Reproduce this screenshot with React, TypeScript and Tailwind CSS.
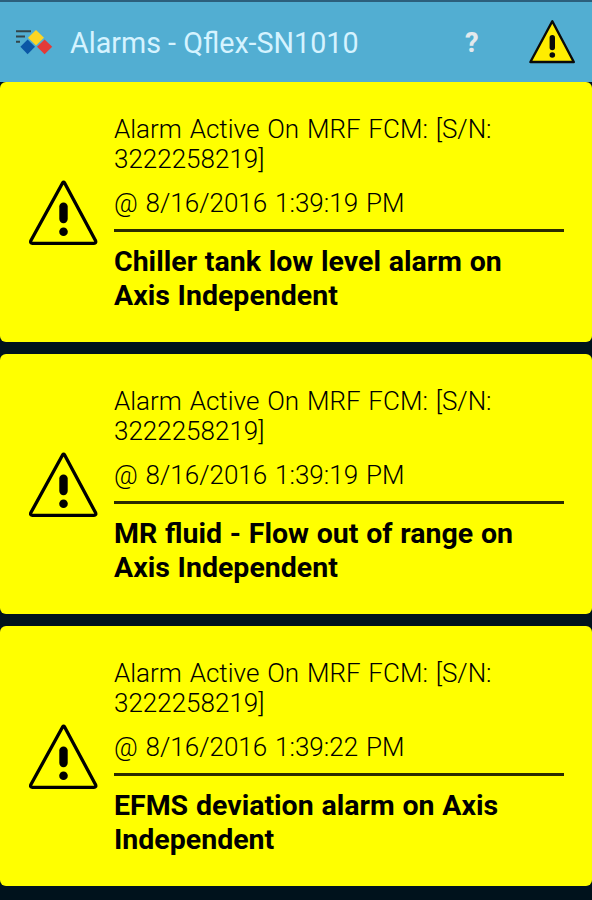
import React from 'react';

interface Alarm {
  source: string;
  time: string;
  message: string;
}

const alarms: Alarm[] = [
  {
    source: 'Alarm Active On MRF FCM: [S/N: 3222258219]',
    time: '@ 8/16/2016 1:39:19 PM',
    message: 'Chiller tank low level alarm on Axis Independent'
  },
  {
    source: 'Alarm Active On MRF FCM: [S/N: 3222258219]',
    time: '@ 8/16/2016 1:39:19 PM',
    message: 'MR fluid - Flow out of range on Axis Independent'
  },
  {
    source: 'Alarm Active On MRF FCM: [S/N: 3222258219]',
    time: '@ 8/16/2016 1:39:22 PM',
    message: 'EFMS deviation alarm on Axis Independent'
  }
];

function Logo() {
  return (
    <svg className="h-[26px] w-[38px] shrink-0" viewBox="0 0 38 26">
      <path d="M1 2.3h15M1 7.6h9M1 12.8h4" stroke="#33454a" strokeWidth="2" />
      <path d="M21 1l8 7.8-8 7.8-8-7.8z" fill="#fcd524" />
      <path d="M12.6 10.4l7.4 7.4-7.4 7.4-7.2-7.4z" fill="#0b57a6" />
      <path d="M29.6 10.4l7.6 7.4-7.6 7.4-7.6-7.4z" fill="#e33a38" />
    </svg>
  );
}

function HeaderWarning() {
  return (
    <svg className="h-[46px] w-[48px] shrink-0" viewBox="0 0 48 46">
      <path
        d="M24.3 2.2L2.4 43h43.4z"
        fill="#ffed00"
        stroke="#0a0a0a"
        strokeWidth="2.4"
        strokeLinejoin="round"
      />
      <path d="M24.3 18.8v9.7" stroke="#0a0a0a" strokeWidth="5.4" strokeLinecap="round" />
      <circle cx="24.3" cy="36" r="2.8" fill="#0a0a0a" />
    </svg>
  );
}

function CardWarning() {
  return (
    <svg className="-mt-px h-[66px] w-[70px] shrink-0" viewBox="0 0 70 66">
      <path
        d="M34.7 2.8L2.8 60.8Q2 63.3 4.4 63.3h61.6Q68.4 63.3 67.6 60.8L36.5 2.8Q35.6 1.6 34.7 2.8z"
        fill="none"
        stroke="#000"
        strokeWidth="3.3"
        strokeLinejoin="round"
      />
      <path d="M35.5 26.6v12.4" stroke="#000" strokeWidth="8.4" strokeLinecap="round" />
      <circle cx="35.5" cy="51.8" r="4.3" fill="#000" />
    </svg>
  );
}

function AlarmCard({ alarm }: { alarm: Alarm }) {
  return (
    <div className="flex h-[260px] items-center rounded-md bg-[#ffff00] pt-[2px] pr-7 pl-7 text-black">
      <CardWarning />
      <div className="ml-4 flex-1">
        <p className="text-[26px] leading-[30px] font-light [word-spacing:1.5px]">{alarm.source}</p>
        <p className="mt-[14px] text-[26px] leading-[30px] font-light [word-spacing:1.5px]">{alarm.time}</p>
        <div className="mt-[11px] h-[3px] bg-[#2b2b00]" />
        <p className="mt-[13px] w-[410px] text-[28.5px] leading-[34px] font-bold [word-spacing:0.7px]">{alarm.message}</p>
      </div>
    </div>
  );
}

export default function App() {
  return (
    <div className="h-[900px] overflow-hidden bg-[#00121c] font-['Roboto',sans-serif]">
      <header className="flex h-[82px] items-center border-t-2 border-[#2c5f7c] bg-[#52aed2] pl-[15px]">
        <Logo />
        <h1 className="mt-[3px] ml-[17px] w-[290px] text-[28.7px] whitespace-nowrap text-[#d5f3ff]">Alarms - Qflex-SN1010</h1>
        <span className="mt-[3px] ml-[105px] text-[27px] font-extrabold text-[#e3e9ed]">?</span>
        <div className="ml-auto mr-[16px]">
          <HeaderWarning />
        </div>
      </header>
      <main className="flex flex-col gap-3">
        {alarms.map((alarm, index) => (
          <AlarmCard key={index} alarm={alarm} />
        ))}
      </main>
    </div>
  );
}
